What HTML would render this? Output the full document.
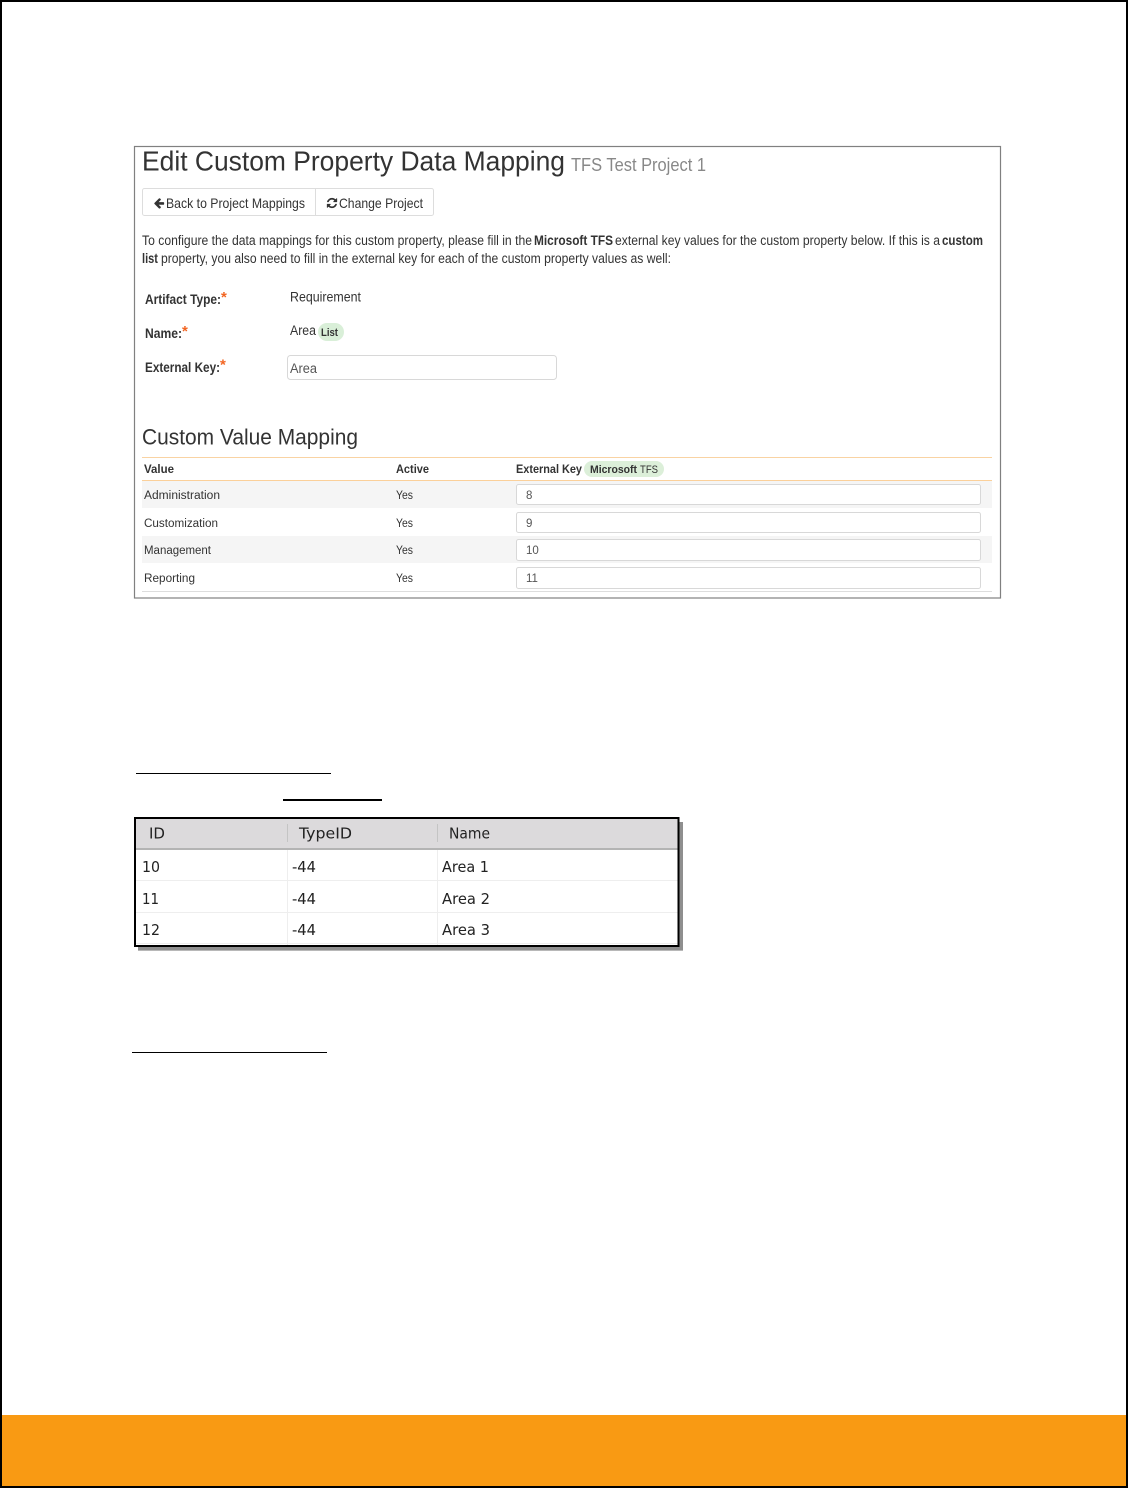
<!DOCTYPE html>
<html lang="en">
<head>
<meta charset="utf-8">
<title>Edit Custom Property Data Mapping</title>
<style>
html,body{margin:0;padding:0;background:#fff}
svg{display:block}
text{font-family:"Liberation Sans",sans-serif;fill:#333;filter:blur(.25px)}
.b{font-weight:bold}
.m{fill:#222;font-family:"DejaVu Sans",sans-serif}
</style>
</head>
<body>
<svg width="1128" height="1488" viewBox="0 0 1128 1488" xmlns="http://www.w3.org/2000/svg">
<rect width="1128" height="1488" fill="#000"/>
<rect x="2" y="2" width="1124" height="1484" fill="#fff"/>
<rect x="2" y="1415" width="1124" height="71" fill="#f99a13"/>

<!-- screenshot frame -->
<rect x="134.500" y="146.500" width="866" height="451.500" fill="#fff" stroke="#808080" stroke-width="1.200"/>

<text x="142" y="170.500" font-size="28" textLength="423" lengthAdjust="spacingAndGlyphs">Edit Custom Property Data Mapping</text>
<text x="571" y="171" font-size="18" textLength="135" lengthAdjust="spacingAndGlyphs" style="fill:#888">TFS Test Project 1</text>

<!-- buttons -->
<rect x="142.500" y="188.500" width="291" height="27" rx="2" fill="#fff" stroke="#ddd"/>
<line x1="315.500" y1="188" x2="315.500" y2="216" stroke="#ddd"/>
<svg x="153" y="197" width="12" height="12" viewBox="0 0 1792 1792"><path fill="#333" d="M1664 896v128q0 53-32.500 90.500t-84.500 37.500h-704l293 294q38 36 38 90t-38 90l-75 76q-37 37-90 37-52 0-91-37l-651-652q-37-37-37-90 0-52 37-91l651-650q38-38 91-38 52 0 90 38l75 74q38 38 38 91t-38 91l-293 293h704q52 0 84.500 37.500t32.500 90.500z"/></svg>
<text x="166" y="208" font-size="14" textLength="139" lengthAdjust="spacingAndGlyphs">Back to Project Mappings</text>
<svg x="326" y="197" width="12" height="12" viewBox="0 0 1792 1792"><path fill="#333" d="M1639 1056q0 5-1 7-64 268-268 434.500t-478 166.500q-146 0-282.500-55t-243.500-157l-129 129q-19 19-45 19t-45-19-19-45v-448q0-26 19-45t45-19h448q26 0 45 19t19 45-19 45l-137 137q71 66 161 102t187 36q134 0 250-65t186-179q11-17 53-117 8-23 30-23h192q13 0 22.500 9.500t9.500 22.500zm25-800v448q0 26-19 45t-45 19h-448q-26 0-45-19t-19-45 19-45l138-138q-148-137-349-137-134 0-250 65t-186 179q-11 17-53 117-8 23-30 23h-199q-13 0-22.500-9.500t-9.500-22.500v-7q65-268 270-434.500t480-166.500q146 0 284 55.500t245 156.500l130-129q19-19 45-19t45 19 19 45z"/></svg>
<text x="339" y="208" font-size="14" textLength="84" lengthAdjust="spacingAndGlyphs">Change Project</text>

<!-- paragraph -->
<text x="142" y="245" font-size="13.500" textLength="390" lengthAdjust="spacingAndGlyphs">To configure the data mappings for this custom property, please fill in the</text>
<text x="534" y="245" font-size="13.500" class="b" textLength="79" lengthAdjust="spacingAndGlyphs">Microsoft TFS</text>
<text x="615" y="245" font-size="13.500" textLength="325" lengthAdjust="spacingAndGlyphs">external key values for the custom property below. If this is a</text>
<text x="942" y="245" font-size="13.500" class="b" textLength="41" lengthAdjust="spacingAndGlyphs">custom</text>
<text x="142" y="263" font-size="13.500" class="b" textLength="16" lengthAdjust="spacingAndGlyphs">list</text>
<text x="161" y="263" font-size="13.500" textLength="510" lengthAdjust="spacingAndGlyphs">property, you also need to fill in the external key for each of the custom property values as well:</text>

<!-- form -->
<text x="145" y="304" font-size="14" class="b" textLength="76" lengthAdjust="spacingAndGlyphs">Artifact Type:</text>
<text x="221" y="302" font-size="15" class="b" style="fill:#f26522">*</text>
<text x="290" y="301.500" font-size="13.500" textLength="71" lengthAdjust="spacingAndGlyphs">Requirement</text>

<text x="145" y="338" font-size="14" class="b" textLength="37" lengthAdjust="spacingAndGlyphs">Name:</text>
<text x="182" y="336" font-size="15" class="b" style="fill:#f26522">*</text>
<text x="290" y="335" font-size="13.500" textLength="26" lengthAdjust="spacingAndGlyphs">Area</text>
<rect x="318" y="323" width="26" height="18" rx="9" fill="#d9efd8"/>
<text x="321" y="336" font-size="11" class="b" textLength="17" lengthAdjust="spacingAndGlyphs">List</text>

<text x="145" y="372" font-size="14" class="b" textLength="75" lengthAdjust="spacingAndGlyphs">External Key:</text>
<text x="220" y="369.500" font-size="15" class="b" style="fill:#f26522">*</text>
<rect x="287.500" y="355.500" width="269" height="24" rx="3" fill="#fff" stroke="#d8d8d8"/>
<text x="290" y="373" font-size="13.500" textLength="27" lengthAdjust="spacingAndGlyphs" style="fill:#555">Area</text>

<!-- custom values -->
<text x="142" y="444.500" font-size="22" textLength="216" lengthAdjust="spacingAndGlyphs">Custom Value Mapping</text>
<rect x="142" y="457" width="850" height="1" fill="#f9d3a3"/>
<text x="144" y="473" font-size="11.500" class="b" textLength="30" lengthAdjust="spacingAndGlyphs">Value</text>
<text x="396" y="473" font-size="11.500" class="b" textLength="33" lengthAdjust="spacingAndGlyphs">Active</text>
<text x="516" y="473" font-size="11.500" class="b" textLength="66" lengthAdjust="spacingAndGlyphs">External Key</text>
<rect x="584" y="461" width="80" height="16" rx="8" fill="#dcefd9"/>
<text x="590" y="473" font-size="11" class="b" textLength="47" lengthAdjust="spacingAndGlyphs">Microsoft</text>
<text x="640" y="473" font-size="11" textLength="18" lengthAdjust="spacingAndGlyphs">TFS</text>
<rect x="142" y="480" width="850" height="1" fill="#fbd09a"/>

<rect x="142" y="481" width="850" height="27" fill="#f5f5f5"/>
<rect x="142" y="536" width="850" height="27" fill="#f5f5f5"/>
<rect x="142" y="591" width="850" height="1" fill="#ddd"/>

<text x="144" y="499" font-size="11.500" textLength="76" lengthAdjust="spacingAndGlyphs">Administration</text>
<text x="396" y="499" font-size="11.500" textLength="17" lengthAdjust="spacingAndGlyphs">Yes</text>
<rect x="516.500" y="484.500" width="464" height="20" rx="2" fill="#fff" stroke="#d8d8d8"/>
<text x="526" y="499" font-size="11.500" style="fill:#555">8</text>

<text x="144" y="527" font-size="11.500" textLength="74" lengthAdjust="spacingAndGlyphs">Customization</text>
<text x="396" y="527" font-size="11.500" textLength="17" lengthAdjust="spacingAndGlyphs">Yes</text>
<rect x="516.500" y="512.500" width="464" height="20" rx="2" fill="#fff" stroke="#d8d8d8"/>
<text x="526" y="527" font-size="11.500" style="fill:#555">9</text>

<text x="144" y="554" font-size="11.500" textLength="67" lengthAdjust="spacingAndGlyphs">Management</text>
<text x="396" y="554" font-size="11.500" textLength="17" lengthAdjust="spacingAndGlyphs">Yes</text>
<rect x="516.500" y="539.500" width="464" height="21" rx="2" fill="#fff" stroke="#d8d8d8"/>
<text x="526" y="554" font-size="11.500" style="fill:#555">10</text>

<text x="144" y="582" font-size="11.500" textLength="51" lengthAdjust="spacingAndGlyphs">Reporting</text>
<text x="396" y="582" font-size="11.500" textLength="17" lengthAdjust="spacingAndGlyphs">Yes</text>
<rect x="516.500" y="567.500" width="464" height="21" rx="2" fill="#fff" stroke="#d8d8d8"/>
<text x="526" y="582" font-size="11.500" style="fill:#555">11</text>

<!-- rules -->
<rect x="136" y="773" width="195" height="1" fill="#000"/>
<rect x="283" y="799" width="99" height="2" fill="#000"/>
<rect x="132" y="1052" width="195" height="1" fill="#000"/>

<!-- database table image -->
<rect x="138" y="822" width="545" height="129" fill="#8f8f8f"/>
<rect x="138" y="950" width="545" height="1" fill="#b8b8b8"/>
<rect x="135" y="818" width="543.500" height="128" fill="#fff" stroke="#000" stroke-width="2"/>
<rect x="136" y="819" width="541.500" height="29" fill="#dcdadc"/>
<rect x="136" y="848" width="541.500" height="2" fill="#b4b4b4"/>
<rect x="287" y="824" width="1" height="18" fill="#c4c4c4"/>
<rect x="437" y="824" width="1" height="18" fill="#c4c4c4"/>
<rect x="287" y="850" width="1" height="95" fill="#eee"/>
<rect x="437" y="850" width="1" height="95" fill="#eee"/>
<rect x="136" y="880" width="541.500" height="1" fill="#eee"/>
<rect x="136" y="912" width="541.500" height="1" fill="#eee"/>
<rect x="136" y="943" width="541.500" height="1" fill="#eee"/>

<text x="149" y="838.500" font-size="15.500" class="m" textLength="16" lengthAdjust="spacingAndGlyphs">ID</text>
<text x="299" y="838.500" font-size="15.500" class="m" textLength="53" lengthAdjust="spacingAndGlyphs">TypeID</text>
<text x="449" y="838.500" font-size="15.500" class="m" textLength="41" lengthAdjust="spacingAndGlyphs">Name</text>

<text x="142" y="872" font-size="15.500" class="m" textLength="18" lengthAdjust="spacingAndGlyphs">10</text>
<text x="292" y="872" font-size="15.500" class="m" textLength="24" lengthAdjust="spacingAndGlyphs">-44</text>
<text x="442" y="872" font-size="15.500" class="m" textLength="47" lengthAdjust="spacingAndGlyphs">Area 1</text>

<text x="142" y="904" font-size="15.500" class="m" textLength="17" lengthAdjust="spacingAndGlyphs">11</text>
<text x="292" y="904" font-size="15.500" class="m" textLength="24" lengthAdjust="spacingAndGlyphs">-44</text>
<text x="442" y="904" font-size="15.500" class="m" textLength="48" lengthAdjust="spacingAndGlyphs">Area 2</text>

<text x="142" y="935" font-size="15.500" class="m" textLength="18" lengthAdjust="spacingAndGlyphs">12</text>
<text x="292" y="935" font-size="15.500" class="m" textLength="24" lengthAdjust="spacingAndGlyphs">-44</text>
<text x="442" y="935" font-size="15.500" class="m" textLength="48" lengthAdjust="spacingAndGlyphs">Area 3</text>
</svg>
</body>
</html>
